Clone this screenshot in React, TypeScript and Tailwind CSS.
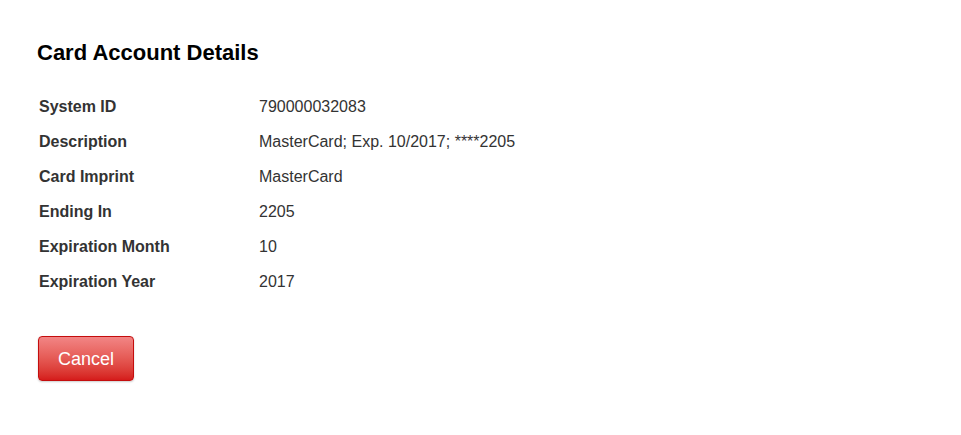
const rows: [string, string][] = [
  ["System ID", "790000032083"],
  ["Description", "MasterCard; Exp. 10/2017; ****2205"],
  ["Card Imprint", "MasterCard"],
  ["Ending In", "2205"],
  ["Expiration Month", "10"],
  ["Expiration Year", "2017"],
];

export default function App() {
  return (
    <div
      className="min-h-screen bg-white pl-[37px] pt-[40px]"
      style={{ fontFamily: '"Liberation Sans", Arial, sans-serif' }}
    >
      <h2 className="text-[22px] leading-[26px] font-bold text-black">
        Card Account Details
      </h2>
      <table className="mt-[23px] border-collapse text-[16px] text-[#333]">
        <tbody>
          {rows.map(([label, value]) => (
            <tr key={label} className="h-[35px]">
              <td className="w-[222px] pl-[2px] font-bold align-middle">{label}</td>
              <td className="align-middle">{value}</td>
            </tr>
          ))}
        </tbody>
      </table>
      <button className="ml-[1px] mt-[37px] h-[45px] w-[96px] rounded-[4px] border border-[#c40d0d] bg-gradient-to-b from-[#f28585] to-[#d51a1a] pt-[2px] text-[18px] text-white shadow-[0_1px_2px_rgba(0,0,0,0.2)]">
        Cancel
      </button>
    </div>
  );
}
